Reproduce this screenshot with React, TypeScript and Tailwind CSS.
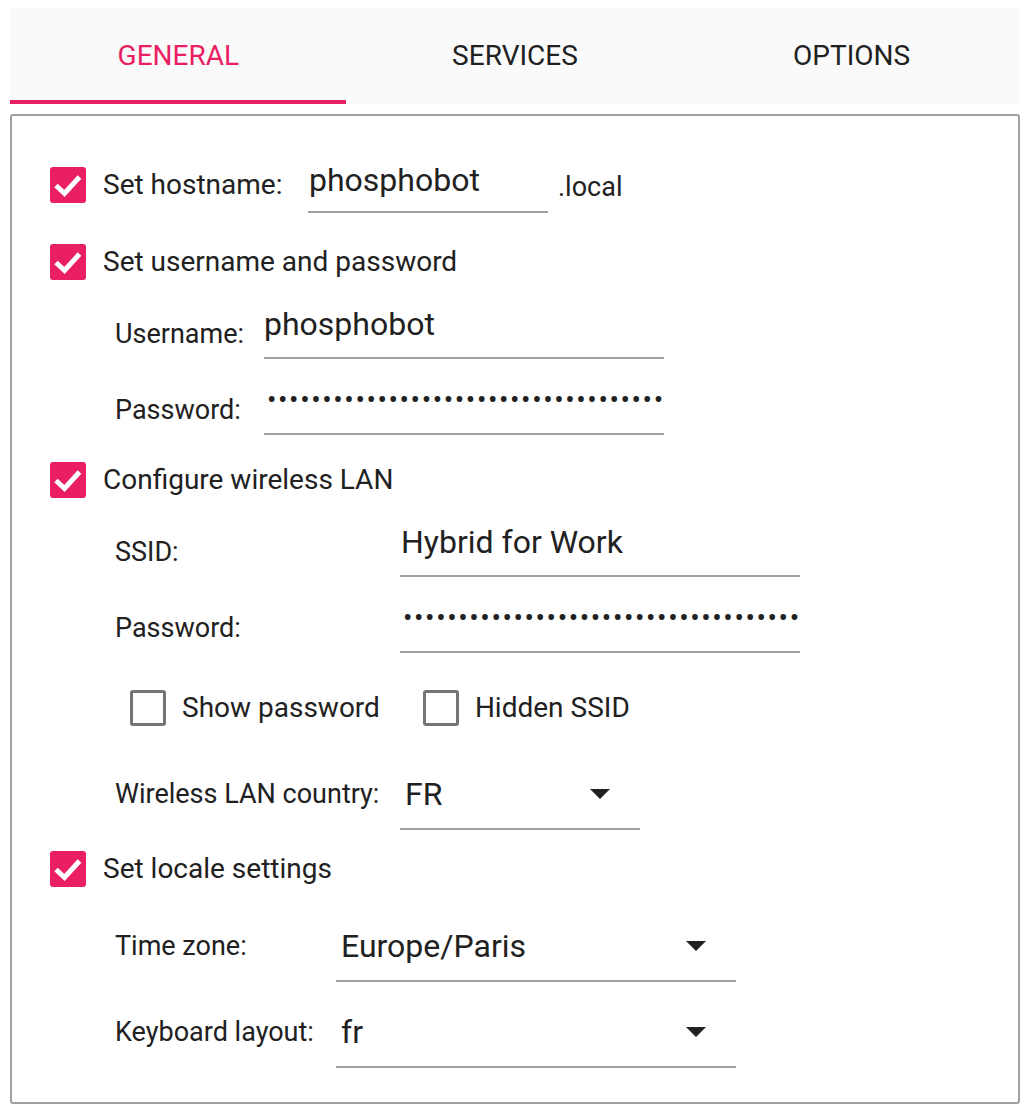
import type { ReactNode } from 'react';

const DOTS = '••••••••••••••••••••••••••••••••••••';

function CheckBox({ checked }: { checked: boolean }) {
    if (!checked) {
        return (
            <div className="h-[36px] w-[36px] shrink-0 rounded-[3px] border-[3px] border-[#757575]" />
        );
    }
    return (
        <div className="flex h-[36px] w-[36px] shrink-0 items-center justify-center rounded-[3px] bg-[#e91e63]">
            <svg width="36" height="36" viewBox="0 0 36 36">
                <path
                    d="M6 18.5 L14.5 26.5 L29.5 10"
                    stroke="white"
                    strokeWidth="5"
                    fill="none"
                />
            </svg>
        </div>
    );
}

function CheckRow({
    label,
    checked = true,
    className = '',
}: {
    label: string;
    checked?: boolean;
    className?: string;
}) {
    return (
        <div className={`flex h-[36px] items-center ${className}`}>
            <CheckBox checked={checked} />
            <span className="ml-[17px] text-[28px] leading-[36px]">{label}</span>
        </div>
    );
}

function Arrow() {
    return (
        <svg width="20" height="10" viewBox="0 0 20 10" className="shrink-0">
            <path d="M0 0 L20 0 L10 10 Z" fill="#212121" />
        </svg>
    );
}

function FieldRow({
    label,
    labelWidth,
    labelTop,
    fieldWidth,
    className = '',
    children,
}: {
    label: string;
    labelWidth: string;
    labelTop: string;
    fieldWidth: string;
    className?: string;
    children: ReactNode;
}) {
    return (
        <div className={`ml-[65px] flex items-start ${className}`}>
            <span className={`${labelWidth} ${labelTop} shrink-0 text-[27px] leading-[34px]`}>
                {label}
            </span>
            <div className={`${fieldWidth} h-[60px] shrink-0 border-b-2 border-[#a0a0a0]`}>
                {children}
            </div>
        </div>
    );
}

function Combo({ value }: { value: string }) {
    return (
        <div className="flex items-center justify-between pt-[7px] pr-[30px] pl-[5px]">
            <span className="text-[32px] leading-[34px]">{value}</span>
            <Arrow />
        </div>
    );
}

export default function App() {
    return (
        <div className="h-[1112px] w-full bg-white px-[10px] pt-[8px] font-['Roboto',sans-serif] text-[#212121]">
            {/* Tabs */}
            <div className="grid h-[96px] grid-cols-3 bg-[#fafafa]">
                <div className="flex flex-col">
                    <div className="flex flex-1 items-center justify-center pt-[3px] text-[28px] text-[#e91e63]">
                        GENERAL
                    </div>
                    <div className="mr-[1px] h-[4px] bg-[#e91e63]" />
                </div>
                <div className="flex flex-col">
                    <div className="flex flex-1 items-center justify-center pt-[3px] text-[28px]">
                        SERVICES
                    </div>
                    <div className="h-[4px]" />
                </div>
                <div className="flex flex-col">
                    <div className="flex flex-1 items-center justify-center pt-[3px] text-[28px]">
                        OPTIONS
                    </div>
                    <div className="h-[4px]" />
                </div>
            </div>

            {/* Panel */}
            <div className="mt-[10px] h-[990px] rounded-[3px] border-2 border-[#a0a0a0] pl-[38px]">
                <div className="mt-[37px] flex h-[60px] items-start">
                    <div className="mt-[14px]">
                        <CheckBox checked />
                    </div>
                    <span className="mt-[15px] ml-[17px] w-[205px] shrink-0 text-[28px] leading-[34px]">
                        Set hostname:
                    </span>
                    <div className="h-[60px] w-[240px] shrink-0 border-b-2 border-[#a0a0a0] pt-[8px] pl-[1px] text-[32px] leading-[38px]">
                        phosphobot
                    </div>
                    <span className="mt-[17px] ml-[10px] text-[27px] leading-[34px]">.local</span>
                </div>

                <CheckRow label="Set username and password" className="mt-[31px]" />

                <FieldRow
                    label="Username:"
                    labelWidth="w-[149px]"
                    labelTop="mt-[18px]"
                    fieldWidth="w-[400px]"
                    className="mt-[19px]"
                >
                    <div className="pt-[8px] text-[32px] leading-[34px]">phosphobot</div>
                </FieldRow>

                <FieldRow
                    label="Password:"
                    labelWidth="w-[149px]"
                    labelTop="mt-[18px]"
                    fieldWidth="w-[400px]"
                    className="mt-[16px]"
                >
                    <div className="overflow-hidden pt-[8px] pl-[3px] text-[28px] leading-[34px] tracking-[1.6px] whitespace-nowrap">
                        {DOTS}
                    </div>
                </FieldRow>

                <CheckRow label="Configure wireless LAN" className="mt-[27px]" />

                <FieldRow
                    label="SSID:"
                    labelWidth="w-[285px]"
                    labelTop="mt-[18px]"
                    fieldWidth="w-[400px]"
                    className="mt-[19px]"
                >
                    <div className="pt-[8px] pl-[1px] text-[32px] leading-[34px]">Hybrid for Work</div>
                </FieldRow>

                <FieldRow
                    label="Password:"
                    labelWidth="w-[285px]"
                    labelTop="mt-[18px]"
                    fieldWidth="w-[400px]"
                    className="mt-[16px]"
                >
                    <div className="overflow-hidden pt-[8px] pl-[3px] text-[28px] leading-[34px] tracking-[1.6px] whitespace-nowrap">
                        {DOTS}
                    </div>
                </FieldRow>

                <div className="mt-[37px] ml-[80px] flex h-[36px] items-center">
                    <CheckBox checked={false} />
                    <span className="ml-[16px] text-[28px] leading-[36px]">Show password</span>
                    <div className="ml-[43px]">
                        <CheckBox checked={false} />
                    </div>
                    <span className="ml-[16px] text-[28px] leading-[36px]">Hidden SSID</span>
                </div>

                <FieldRow
                    label="Wireless LAN country:"
                    labelWidth="w-[285px]"
                    labelTop="mt-[7px]"
                    fieldWidth="w-[240px]"
                    className="mt-[44px]"
                >
                    <Combo value="FR" />
                </FieldRow>

                <CheckRow label="Set locale settings" className="mt-[21px]" />

                <FieldRow
                    label="Time zone:"
                    labelWidth="w-[221px]"
                    labelTop="mt-[7px]"
                    fieldWidth="w-[400px]"
                    className="mt-[35px]"
                >
                    <Combo value="Europe/Paris" />
                </FieldRow>

                <FieldRow
                    label="Keyboard layout:"
                    labelWidth="w-[221px]"
                    labelTop="mt-[7px]"
                    fieldWidth="w-[400px]"
                    className="mt-[26px]"
                >
                    <Combo value="fr" />
                </FieldRow>
            </div>
        </div>
    );
}
